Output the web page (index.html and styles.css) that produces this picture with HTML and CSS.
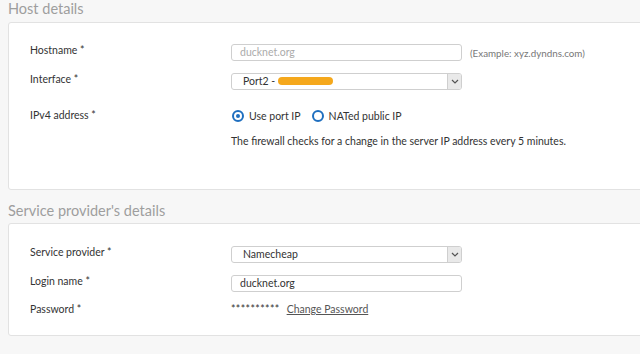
FILE: index.html
```html
<!DOCTYPE html>
<html>
<head>
<meta charset="utf-8">
<link rel="stylesheet" href="styles.css">
</head>
<body>
<div class="page">
  <h2 class="section-title first">Host details</h2>
  <div class="panel panel-host">
    <div class="row r-host">
      <div class="label">Hostname *</div>
      <div class="control">
        <div class="input placeholder">ducknet.org</div>
        <span class="hint">(Example: xyz.dyndns.com)</span>
      </div>
    </div>
    <div class="row r-iface">
      <div class="label">Interface *</div>
      <div class="control">
        <div class="select"><span class="sel-text">Port2 - <span class="redact"></span></span><span class="arrow"><svg width="8" height="5" viewBox="0 0 8 5"><path d="M1 1 L4 4 L7 1" fill="none" stroke="#555" stroke-width="1.2"/></svg></span></div>
      </div>
    </div>
    <div class="row r-ip">
      <div class="label">IPv4 address *</div>
      <div class="control">
        <div class="radios">
          <span class="radio checked"></span><span class="radio-label">Use port IP</span>
          <span class="radio"></span><span class="radio-label">NATed public IP</span>
        </div>
      </div>
    </div>
    <div class="row r-desc">
      <div class="label"></div>
      <div class="control desc">The firewall checks for a change in the server IP address every 5 minutes.</div>
    </div>
  </div>
  <h2 class="section-title second">Service provider's details</h2>
  <div class="panel panel-svc">
    <div class="row r-svc">
      <div class="label">Service provider *</div>
      <div class="control">
        <div class="select"><span class="sel-text">Namecheap</span><span class="arrow"><svg width="8" height="5" viewBox="0 0 8 5"><path d="M1 1 L4 4 L7 1" fill="none" stroke="#555" stroke-width="1.2"/></svg></span></div>
      </div>
    </div>
    <div class="row r-login">
      <div class="label">Login name *</div>
      <div class="control">
        <div class="input value">ducknet.org</div>
      </div>
    </div>
    <div class="row r-pass">
      <div class="label">Password *</div>
      <div class="control">
        <span class="stars">**********</span><a class="link" href="#">Change Password</a>
      </div>
    </div>
  </div>
</div>
</body>
</html>
```
FILE: styles.css
```css
html, body {
  margin: 0;
  padding: 0;
  background: #f7f7f7;
  overflow: hidden;
  width: 640px;
  height: 354px;
}
.page {
  font-family: Lato, "Open Sans", sans-serif;
  font-size: 10.5px;
  color: #333;
  width: 680px;
}
.section-title {
  margin: 0;
  padding-left: 8px;
  font-weight: 400;
  font-size: 14.5px;
  color: #9e9e9e;
  line-height: 18px;
}
.section-title.first {
  height: 22px;
}
.section-title.second {
  height: 33px;
  line-height: 42px;
}
.panel {
  margin-left: 8px;
  background: #fff;
  border: 1px solid #e2e2e2;
  border-radius: 3px;
  box-sizing: border-box;
  padding-left: 21px;
}
.panel-host {
  height: 168px;
  padding-top: 21px;
}
.panel-svc {
  height: 113px;
  padding-top: 22px;
}
.row {
  display: grid;
  grid-template-columns: 201px auto;
  align-items: start;
}
.label {
  line-height: 13px;
  color: #333;
}
.control {
  display: flex;
  align-items: center;
}
.input, .select {
  box-sizing: border-box;
  width: 231px;
  height: 17px;
  border: 1px solid #cfcfcf;
  border-radius: 3px;
  background: #fff;
  line-height: 15px;
  padding-left: 8px;
}
.input.placeholder { color: #ababab; }
.input.value { color: #333; }
.hint {
  margin-left: 8px;
  color: #777;
  font-size: 9.8px;
}
.r-iface { margin-top: 12px; }
.select {
  display: flex;
  padding-left: 0;
  overflow: hidden;
}
.sel-text {
  flex: 1;
  padding-left: 11px;
  display: flex;
  align-items: center;
}
.redact {
  display: inline-block;
  width: 55px;
  height: 8px;
  background: #f5a81c;
  border-radius: 5px;
  margin-left: 3px;
  margin-top: -2px;
}
.arrow {
  width: 13px;
  background: #e9e9e9;
  border-left: 1px solid #cfcfcf;
  display: flex;
  align-items: center;
  justify-content: center;
}
.r-ip { margin-top: 19px; }
.radios {
  display: flex;
  align-items: center;
  height: 14px;
}
.radio {
  box-sizing: border-box;
  width: 12px;
  height: 12px;
  border: 2px solid #1f6fbf;
  border-radius: 50%;
  position: relative;
  margin-left: 1px;
}
.radio.checked::after {
  content: "";
  position: absolute;
  left: 2px;
  top: 2px;
  width: 4px;
  height: 4px;
  background: #1f6fbf;
  border-radius: 50%;
}
.radio-label {
  margin-left: 5px;
  margin-right: 10px;
}
.r-desc { margin-top: 11px; }
.desc { line-height: 14px; }
.r-login { margin-top: 12px; }
.r-pass { margin-top: 11px; }
.stars { color: #333; letter-spacing: 0.4px; }
.link {
  margin-left: 7px;
  color: #555;
  text-decoration: underline;
}
```
